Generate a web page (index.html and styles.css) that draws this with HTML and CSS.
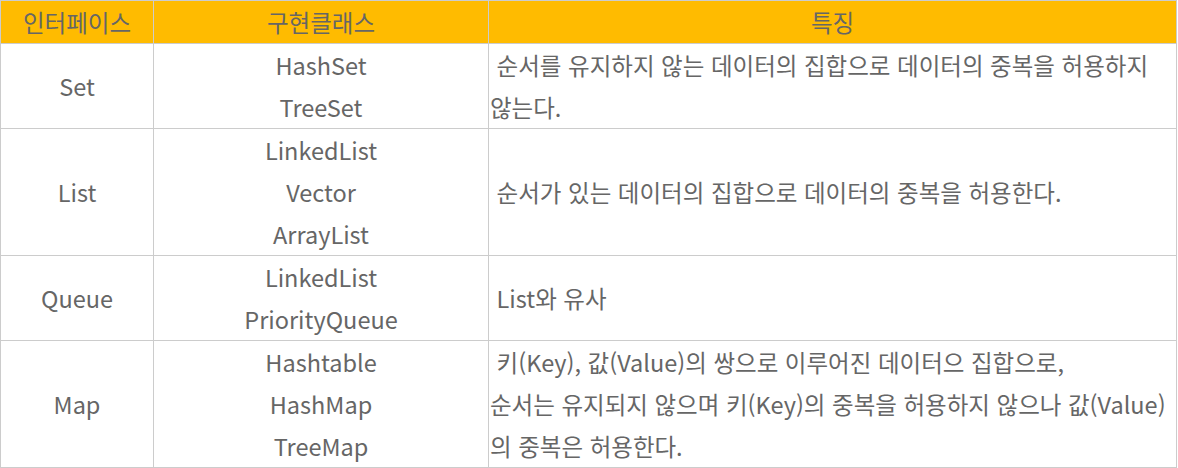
FILE: index.html
```html
<!DOCTYPE html>
<html lang="ko">
<head>
<meta charset="utf-8">
<link rel="stylesheet" href="styles.css">
</head>
<body>
<table class="tbl">
  <colgroup>
    <col class="c1">
    <col class="c2">
    <col class="c3">
  </colgroup>
  <thead>
    <tr class="head">
      <th>인터페이스</th>
      <th>구현클래스</th>
      <th>특징</th>
    </tr>
  </thead>
  <tbody>
    <tr>
      <td class="name">Set</td>
      <td class="impl">HashSet<br>TreeSet</td>
      <td class="desc">&nbsp;순서를 유지하지 않는 데이터의 집합으로 데이터의 중복을 허용하지<br>않는다.</td>
    </tr>
    <tr>
      <td class="name">List</td>
      <td class="impl">LinkedList<br>Vector<br>ArrayList</td>
      <td class="desc">&nbsp;순서가 있는 데이터의 집합으로 데이터의 중복을 허용한다.</td>
    </tr>
    <tr>
      <td class="name">Queue</td>
      <td class="impl">LinkedList<br>PriorityQueue</td>
      <td class="desc">&nbsp;List와 유사</td>
    </tr>
    <tr>
      <td class="name">Map</td>
      <td class="impl">Hashtable<br>HashMap<br>TreeMap</td>
      <td class="desc">&nbsp;키(Key), 값(Value)의 쌍으로 이루어진 데이터으 집합으로,<br>순서는 유지되지 않으며 키(Key)의 중복을 허용하지 않으나 값(Value)<br>의 중복은 허용한다.</td>
    </tr>
  </tbody>
</table>
</body>
</html>
```
FILE: styles.css
```css
html, body {
  margin: 0;
  padding: 0;
  background: #ffffff;
}
.tbl {
  border-collapse: collapse;
  table-layout: fixed;
  width: 1176px;
  font-family: "Noto Sans CJK KR", "Noto Sans", sans-serif;
  font-size: 23.5px;
  line-height: 42px;
  color: #666666;
}
.c1 { width: 153px; }
.c2 { width: 335px; }
.c3 { width: 688px; }
.tbl th, .tbl td {
  border: 1px solid #cccccc;
  padding: 0;
  vertical-align: middle;
}
.head th {
  background: #ffbb00;
  font-weight: normal;
  text-align: center;
  height: 42px;
}
.name, .impl {
  text-align: center;
}
.desc {
  text-align: left;
  padding: 0 1px !important;
}
```
